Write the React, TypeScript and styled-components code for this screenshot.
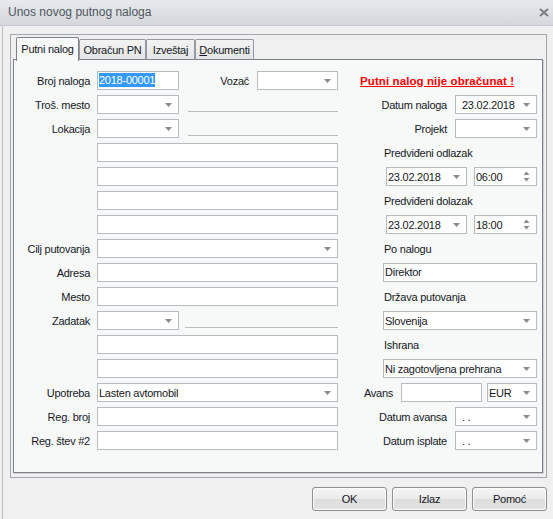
import React from "react";
import styled, { createGlobalStyle } from "styled-components";

const GlobalStyle = createGlobalStyle`
  html, body {
    margin: 0;
    padding: 0;
  }
  body {
    width: 553px;
    height: 519px;
    overflow: hidden;
    background: #f0f0f0;
    font-family: "Liberation Sans", Arial, sans-serif;
    font-size: 11px;
    letter-spacing: -0.25px;
    color: #15181d;
  }
`;

const DownArrow = () => (
    <svg width="7" height="4" viewBox="0 0 7 4">
        <path d="M0 0H7L3.5 4Z" fill="#8c8c8c" />
    </svg>
);

const SpinArrows = () => (
    <svg width="7" height="11" viewBox="0 0 7 11">
        <path d="M0.5 4H6.5L3.5 0.5Z" fill="#8c8c8c" />
        <path d="M0.5 7H6.5L3.5 10.5Z" fill="#8c8c8c" />
    </svg>
);

export default function App() {
    return (
        <Window>
            <GlobalStyle />
            <TitleBar>
                <Title>Unos novog putnog naloga</Title>
                <CloseButton>
                    <svg width="10" height="9" viewBox="0 0 10 9">
                        <path d="M1 1L9 8M9 1L1 8" stroke="#7a7d82" strokeWidth="2" />
                    </svg>
                </CloseButton>
            </TitleBar>

            <Body>
                <Frame>
                    <TabStrip>
                        <Tab $active $w={63}>Putni nalog</Tab>
                        <Tab $w={67}>Obračun PN</Tab>
                        <Tab $w={49}>Izveštaj</Tab>
                        <Tab $w={59}><u>D</u>okumenti</Tab>
                    </TabStrip>

                    <Panel>
                        <LeftColumn>
                            <Label>Broj naloga</Label>
                            <FieldCell>
                                <Field $w={82}><Selected>2018-00001</Selected></Field>
                                <InlineLabel>Vozač</InlineLabel>
                                <Combo $w={81} />
                            </FieldCell>

                            <Label>Troš. mesto</Label>
                            <FieldCell>
                                <Combo $w={82} />
                                <Separator $offset={9} />
                            </FieldCell>

                            <Label>Lokacija</Label>
                            <FieldCell>
                                <Combo $w={82} />
                                <Separator $offset={9} />
                            </FieldCell>

                            <Label />
                            <Field />
                            <Label />
                            <Field />
                            <Label />
                            <Field />
                            <Label />
                            <Field />

                            <Label>Cilj putovanja</Label>
                            <Combo />

                            <Label>Adresa</Label>
                            <Field />

                            <Label>Mesto</Label>
                            <Field />

                            <Label>Zadatak</Label>
                            <FieldCell>
                                <Combo $w={82} />
                                <Separator $offset={6} />
                            </FieldCell>

                            <Label />
                            <Field />
                            <Label />
                            <Field />

                            <Label>Upotreba</Label>
                            <Combo value="Lasten avtomobil" />

                            <Label>Reg. broj</Label>
                            <Field />

                            <Label>Reg. štev #2</Label>
                            <Field />
                        </LeftColumn>

                        <RightColumn>
                            <Warning>Putni nalog nije obračunat !</Warning>

                            <EndRow>
                                <InlineLabel>Datum naloga</InlineLabel>
                                <Combo $w={82} $inset value="23.02.2018" />
                            </EndRow>

                            <EndRow>
                                <InlineLabel>Projekt</InlineLabel>
                                <Combo $w={82} />
                            </EndRow>

                            <Caption>Predviđeni odlazak</Caption>
                            <IndentRow $indent={26}>
                                <Combo $w={81} value="23.02.2018" />
                                <Spinner value="06:00" />
                            </IndentRow>

                            <Caption>Predviđeni dolazak</Caption>
                            <IndentRow $indent={26}>
                                <Combo $w={81} value="23.02.2018" />
                                <Spinner value="18:00" />
                            </IndentRow>

                            <Caption>Po nalogu</Caption>
                            <IndentRow $indent={23}>
                                <Field>Direktor</Field>
                            </IndentRow>

                            <Caption>Država putovanja</Caption>
                            <IndentRow $indent={23}>
                                <Combo value="Slovenija" />
                            </IndentRow>

                            <Caption>Ishrana</Caption>
                            <IndentRow $indent={23}>
                                <Combo value="Ni zagotovljena prehrana" />
                            </IndentRow>

                            <EndRow>
                                <InlineLabel>Avans</InlineLabel>
                                <Field $w={81} />
                                <Combo $w={50} $gap={5} value="EUR" />
                            </EndRow>

                            <EndRow>
                                <InlineLabel>Datum avansa</InlineLabel>
                                <Combo $w={82} $inset value=".  ." />
                            </EndRow>

                            <EndRow>
                                <InlineLabel>Datum isplate</InlineLabel>
                                <Combo $w={82} $inset value=".  ." />
                            </EndRow>
                        </RightColumn>
                    </Panel>
                </Frame>

                <ButtonBar>
                    <Button>OK</Button>
                    <Button>Izlaz</Button>
                    <Button>Pomoć</Button>
                </ButtonBar>
            </Body>
        </Window>
    );
}

function Combo({ value, $w, $inset, $gap }: { value?: string; $w?: number; $inset?: boolean; $gap?: number }) {
    return (
        <ComboBox $w={$w} $inset={$inset} $gap={$gap}>
            <ComboText>{value}</ComboText>
            <DownArrow />
        </ComboBox>
    );
}

function Spinner({ value }: { value: string }) {
    return (
        <ComboBox $w={63} $gap={7}>
            <ComboText>{value}</ComboText>
            <SpinArrows />
        </ComboBox>
    );
}

const Window = styled.div`
width: 553px;
height: 519px;
display: flex;
flex-direction: column;
`

const TitleBar = styled.div`
height: 26px;
flex-shrink: 0;
box-sizing: border-box;
display: flex;
align-items: center;
justify-content: space-between;
padding: 0 4px 1px 8px;
background: linear-gradient(#e6e9ed, #d4d8de);
border-bottom: 1px solid #c3c7cd;
`

const Title = styled.div`
font-size: 12px;
letter-spacing: 0;
color: #50555d;
`

const CloseButton = styled.div`
display: flex;
align-items: center;
padding-top: 1px;
`

const Body = styled.div`
flex: 1;
display: flex;
flex-direction: column;
margin-left: 2px;
border-left: 1px solid #b9bdc3;
padding: 8px 6px 0 7px;
`

const Frame = styled.div`
height: 444px;
box-sizing: border-box;
display: flex;
flex-direction: column;
border: 1px solid #a3a7ad;
padding: 2px 3px 4px 2px;
`

const TabStrip = styled.div`
height: 23px;
display: flex;
align-items: flex-end;
padding-left: 3px;
margin-bottom: -1px;
position: relative;
z-index: 1;
`

const Tab = styled.div<{ $active?: boolean; $w: number }>`
width: ${p => p.$w}px;
height: ${p => (p.$active ? 24 : 21)}px;
box-sizing: border-box;
display: flex;
align-items: center;
justify-content: center;
padding-bottom: ${p => (p.$active ? 2 : 0)}px;
border: 1px solid ${p => (p.$active ? "#7d8187" : "#959aa0")};
border-bottom: ${p => (p.$active ? "none" : "1px solid #7d8187")};
border-radius: 2px 2px 0 0;
background: ${p => (p.$active ? "#f7f8f8" : "linear-gradient(#f3f3f3, #e4e5e6)")};
margin-top: auto;
`

const Panel = styled.div`
flex: 1;
display: flex;
gap: 22px;
border: 1px solid #7d8187;
background: #f7f8f8;
box-shadow: 1px 1px 0 #cfd1d4;
padding-top: 11px;
`

const LeftColumn = styled.div`
display: grid;
grid-template-columns: 76px 241px;
grid-auto-rows: 19px;
column-gap: 7px;
row-gap: 5px;
`

const RightColumn = styled.div`
width: 177px;
display: grid;
grid-auto-rows: 19px;
row-gap: 5px;
`

const Label = styled.div`
display: flex;
align-items: center;
justify-content: flex-end;
white-space: nowrap;
`

const InlineLabel = styled.div`
display: flex;
align-items: center;
white-space: nowrap;
margin-right: 8px;
margin-left: auto;
`

const FieldCell = styled.div`
display: flex;
`

const Field = styled.div<{ $w?: number }>`
${p => (p.$w ? `width: ${p.$w}px;` : "flex: 1;")}
height: 19px;
box-sizing: border-box;
flex-shrink: 0;
background: #fff;
border: 1px solid #b7bbc1;
padding: 0 1px;
line-height: 17px;
white-space: nowrap;
overflow: hidden;
`

const Selected = styled.span`
background: #3399ff;
color: #fff;
padding: 1px 0;
`

const ComboBox = styled.div<{ $w?: number; $inset?: boolean; $gap?: number }>`
${p => (p.$w ? `width: ${p.$w}px;` : "flex: 1;")}
height: 19px;
box-sizing: border-box;
flex-shrink: 0;
display: flex;
align-items: center;
margin-left: ${p => p.$gap ?? 0}px;
background: #fff;
border: 1px solid #b7bbc1;
padding: 0 6px 0 ${p => (p.$inset ? 6 : 1)}px;
`

const ComboText = styled.span`
flex: 1;
white-space: nowrap;
overflow: hidden;
`

const Separator = styled.div<{ $offset: number }>`
flex: 1;
height: 1px;
align-self: flex-end;
margin: 0 0 2px ${p => p.$offset}px;
background: #b9bdc2;
`

const Warning = styled.div`
display: flex;
align-items: center;
color: #ff0000;
font-size: 11.5px;
font-weight: bold;
letter-spacing: 0.1px;
text-decoration: underline;
white-space: nowrap;
`

const EndRow = styled.div`
display: flex;
justify-content: flex-end;
`

const IndentRow = styled.div<{ $indent: number }>`
display: flex;
padding-left: ${p => p.$indent}px;
`

const Caption = styled.div`
display: flex;
align-items: center;
padding-left: 24px;
white-space: nowrap;
`

const ButtonBar = styled.div`
display: flex;
justify-content: flex-end;
gap: 5px;
margin-top: 9px;
`

const Button = styled.div`
width: 75px;
height: 24px;
box-sizing: border-box;
display: flex;
align-items: center;
justify-content: center;
border: 1px solid #8f9092;
border-radius: 3px;
box-shadow: inset 0 0 0 1px #fbfbfb;
background: linear-gradient(#f5f5f5, #ebebeb 50%, #dddddd 51%, #e3e3e3);
`
